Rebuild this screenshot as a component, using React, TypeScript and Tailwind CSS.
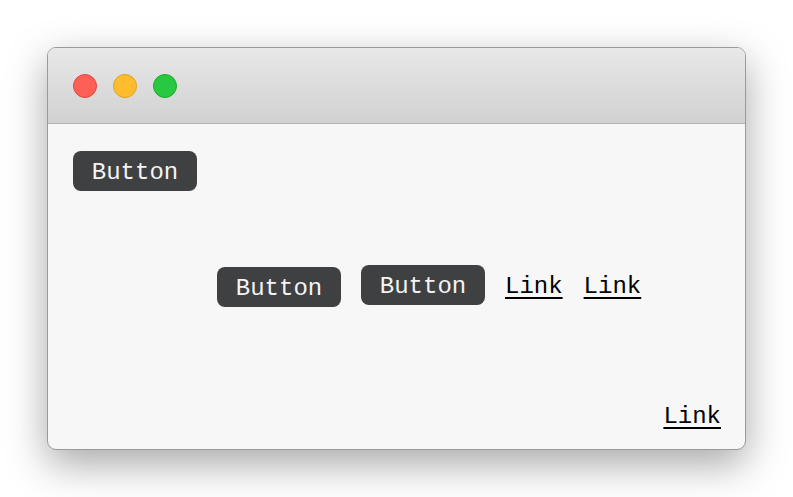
export default function App() {
  const mono = { fontFamily: '"Liberation Mono", "DejaVu Sans Mono", monospace' };
  return (
    <div className="w-[793px] h-[497px] bg-white pl-[47px] pt-[47px]">
      <div className="w-[699px] h-[403px] rounded-[9px] border border-[#9a9a9a] bg-[#f7f7f7] overflow-hidden flex flex-col shadow-[0_14px_40px_rgba(0,0,0,0.35)]">
        {/* Title bar */}
        <div className="h-[76px] shrink-0 flex items-center gap-4 pl-[25px] bg-gradient-to-b from-[#e8e8e8] to-[#d1d1d1] border-b border-[#b4b4b4]">
          <span className="w-6 h-6 rounded-full bg-[#fe5f57] border border-[#e14640]" />
          <span className="w-6 h-6 rounded-full bg-[#febc2e] border border-[#dfa023]" />
          <span className="w-6 h-6 rounded-full bg-[#28c840] border border-[#1aab29]" />
        </div>

        {/* Content */}
        <div className="flex-1 flex flex-col pt-[27px] pl-[25px] pr-[24px] pb-[20px]" style={mono}>
          <div>
            <button className="w-[124px] h-10 pt-[3px] rounded-lg bg-[#3f4042] text-[#f4f4f4] text-[24px] leading-none">
              Button
            </button>
          </div>

          <div className="flex items-start gap-5 mt-[74px] pl-[144px]">
            <button className="mt-[2px] w-[124px] h-10 pt-[3px] rounded-lg bg-[#3f4042] text-[#f4f4f4] text-[24px] leading-none">
              Button
            </button>
            <button className="w-[124px] h-10 pt-[3px] rounded-lg bg-[#3f4042] text-[#f4f4f4] text-[24px] leading-none">
              Button
            </button>
            <a href="#" className="h-10 pt-[3px] flex items-center text-[24px] leading-none text-black underline underline-offset-4 decoration-2">
              Link
            </a>
            <a href="#" className="ml-px h-10 pt-[3px] flex items-center text-[24px] leading-none text-black underline underline-offset-4 decoration-2">
              Link
            </a>
          </div>

          <div className="mt-auto flex justify-end">
            <a href="#" className="text-[24px] leading-none text-black underline underline-offset-4 decoration-2">
              Link
            </a>
          </div>
        </div>
      </div>
    </div>
  );
}
